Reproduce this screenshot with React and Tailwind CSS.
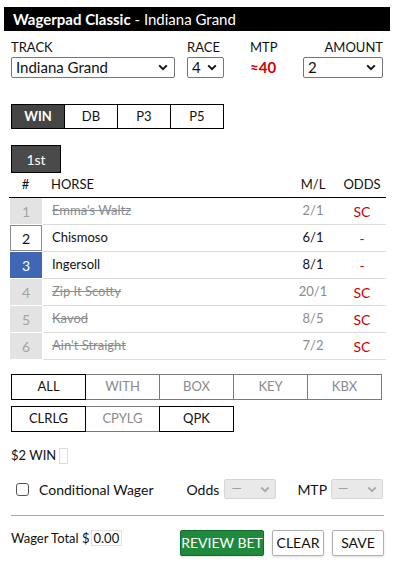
import React from 'react';

const Chevron = ({ color = '#111' }) => (
  <svg width="10" height="7" viewBox="0 0 10 7" className="shrink-0">
    <path d="M1.2 1.4 L5 5.2 L8.8 1.4" fill="none" stroke={color} strokeWidth="2" />
  </svg>
);

const FakeSelect = ({ value, className }) => (
  <div className={`flex items-center justify-between h-[21px] border border-[#767676] rounded-[2px] bg-white pl-[4px] pr-[6px] text-[15px] text-[#111] ${className}`}>
    <span>{value}</span>
    <Chevron />
  </div>
);

const DisabledSelect = () => (
  <div className="flex items-center justify-between w-[52px] h-[20px] border border-[#d6d6d6] rounded-[2px] bg-[#e9e9e9] pl-[6px] pr-[5px] text-[13px] text-[#a0a0a0]">
    <span>—</span>
    <Chevron color="#aaa" />
  </div>
);

const horses = [
  { n: 1, name: "Emma's Waltz", ml: '2/1', odds: 'SC', scratched: true },
  { n: 2, name: 'Chismoso', ml: '6/1', odds: '-', state: 'outline' },
  { n: 3, name: 'Ingersoll', ml: '8/1', odds: '-', state: 'selected' },
  { n: 4, name: 'Zip It Scotty', ml: '20/1', odds: 'SC', scratched: true },
  { n: 5, name: 'Kavod', ml: '8/5', odds: 'SC', scratched: true },
  { n: 6, name: "Ain't Straight", ml: '7/2', odds: 'SC', scratched: true },
];

const numCell = (h) => {
  if (h.state === 'selected') return 'bg-[#3f67b3] text-white';
  if (h.state === 'outline') return 'bg-white border border-[#8a8a8a] text-[#111]';
  return 'bg-[#e3e3e3] text-[#a3a3a3]';
};

const HorseRow = ({ h }) => (
  <div className="flex h-[27px] text-[13px]">
    <div className={`w-[32px] h-[26px] flex items-center justify-center text-[14px] ${numCell(h)}`}>{h.n}</div>
    <div className="flex flex-1 items-center ml-[1px] border-b border-[#dcdcdc]">
      <div className={`flex-1 pl-[9px] ${h.scratched ? 'line-through text-[#8c8c8c]' : 'text-[#111]'}`}>{h.name}</div>
      <div className={`w-[50px] text-center ${h.scratched ? 'text-[#8c8c8c]' : 'text-[#111]'}`}>{h.ml}</div>
      <div className="w-[48px] text-center text-[#cc0000] text-[14px]">{h.odds}</div>
    </div>
  </div>
);

const BetBtn = ({ label, active, first }) => (
  <div
    className={`w-[75px] h-[26px] flex items-center justify-center border text-[13px] ${
      first ? '' : '-ml-[1px]'
    } ${active ? 'relative z-10 border-black text-[#111]' : 'border-[#7a7a7a] text-[#8a8a8a]'}`}
  >
    {label}
  </div>
);

const App = () => {
  return (
    <div className="min-h-screen bg-white" style={{ fontFamily: 'Lato, "Open Sans", sans-serif' }}>
      <div className="w-[386px] ml-[4px] pt-[7px]">
        {/* Title bar */}
        <div className="h-[24px] bg-black text-white text-[15px] leading-[24px] pl-[9px]">
          <span className="font-bold">Wagerpad Classic</span> - Indiana Grand
        </div>

        <div className="pl-[7px] pr-[3px]">
          {/* Track / race / mtp / amount */}
          <div className="flex mt-[8px] text-[13px] text-[#111]">
            <div className="w-[164px] flex flex-col">
              <span className="leading-[16px]">TRACK</span>
              <FakeSelect value="Indiana Grand" className="mt-[2px]" />
            </div>
            <div className="w-[37px] ml-[12px] flex flex-col">
              <span className="leading-[16px]">RACE</span>
              <FakeSelect value="4" className="mt-[2px]" />
            </div>
            <div className="ml-[26px] flex flex-col">
              <span className="leading-[16px]">MTP</span>
              <span className="mt-[2px] h-[21px] leading-[21px] text-[15px] font-bold text-[#d40000]">≈40</span>
            </div>
            <div className="w-[80px] ml-auto mr-[4px] flex flex-col">
              <span className="leading-[16px] text-right">AMOUNT</span>
              <FakeSelect value="2" className="mt-[2px]" />
            </div>
          </div>

          {/* Bet type tabs */}
          <div className="flex mt-[26px]">
            {['WIN', 'DB', 'P3', 'P5'].map((t, i) => (
              <div
                key={t}
                className={`w-[54px] h-[25px] flex items-center justify-center border border-black text-[13px] ${
                  i ? '-ml-[1px]' : ''
                } ${t === 'WIN' ? 'bg-[#454545] text-white font-bold' : 'bg-white text-[#111]'}`}
              >
                {t}
              </div>
            ))}
          </div>

          {/* Leg */}
          <div className="mt-[16px] w-[50px] h-[28px] flex items-center justify-center bg-[#4a4a4a] border border-black text-white text-[14px]">
            1st
          </div>
        </div>

        {/* Runners */}
        <div className="pl-[5px] pr-[4px]">
          <div className="flex items-center h-[25px] border-b border-black text-[13px] text-[#111]">
            <div className="w-[33px] text-center">#</div>
            <div className="flex-1 pl-[9px]">HORSE</div>
            <div className="w-[50px] text-center">M/L</div>
            <div className="w-[48px] text-center">ODDS</div>
          </div>
          <div className="pl-[1px]">
            {horses.map((h) => (
              <HorseRow key={h.n} h={h} />
            ))}
          </div>
        </div>

        <div className="pl-[7px] pr-[3px]">
          {/* Modifiers */}
          <div className="flex mt-[14px]">
            {['ALL', 'WITH', 'BOX', 'KEY', 'KBX'].map((b, i) => (
              <BetBtn key={b} label={b} active={b === 'ALL'} first={i === 0} />
            ))}
          </div>
          <div className="flex mt-[6px]">
            {['CLRLG', 'CPYLG', 'QPK'].map((b, i) => (
              <BetBtn key={b} label={b} active={b !== 'CPYLG'} first={i === 0} />
            ))}
          </div>

          <div className="flex items-center mt-[14px] text-[13px] text-[#111]">
            <span>$2 WIN</span>
            <span className="ml-[3px] w-[9px] h-[16px] border border-[#dcdcdc]" />
          </div>

          {/* Conditional wager */}
          <div className="flex items-center mt-[13px] text-[14px] text-[#111]">
            <span className="ml-[5px] w-[13px] h-[13px] border border-[#555] rounded-[3px] bg-white" />
            <span className="ml-[10px]">Conditional Wager</span>
            <span className="ml-[33px]">Odds</span>
            <div className="ml-[5px]"><DisabledSelect /></div>
            <span className="ml-[21px]">MTP</span>
            <div className="ml-[4px]"><DisabledSelect /></div>
          </div>

          <div className="mt-[15px] border-t border-[#a8a8a8] w-[373px]" />

          {/* Totals and actions */}
          <div className="flex items-start mt-[13px]">
            <div className="flex items-center text-[13px] text-[#111]">
              <span>Wager Total $</span>
              <span className="ml-[1px] px-[2px] h-[16px] leading-[15px] border border-[#e0e0e0]">0.00</span>
            </div>
            <div className="flex ml-auto mr-[3px] mt-[1px] gap-[8px]">
              <button className="w-[84px] h-[26px] bg-[#1f8a3c] border border-[#146b2c] rounded-[2px] text-white text-[14px] shadow-sm">
                REVIEW BET
              </button>
              <button className="w-[52px] h-[26px] bg-white border border-[#b0b0b0] rounded-[2px] text-[#111] text-[14px] shadow-sm">
                CLEAR
              </button>
              <button className="w-[52px] h-[26px] bg-white border border-[#b0b0b0] rounded-[2px] text-[#111] text-[14px] shadow-sm">
                SAVE
              </button>
            </div>
          </div>
        </div>
      </div>
    </div>
  );
};

export default App;
